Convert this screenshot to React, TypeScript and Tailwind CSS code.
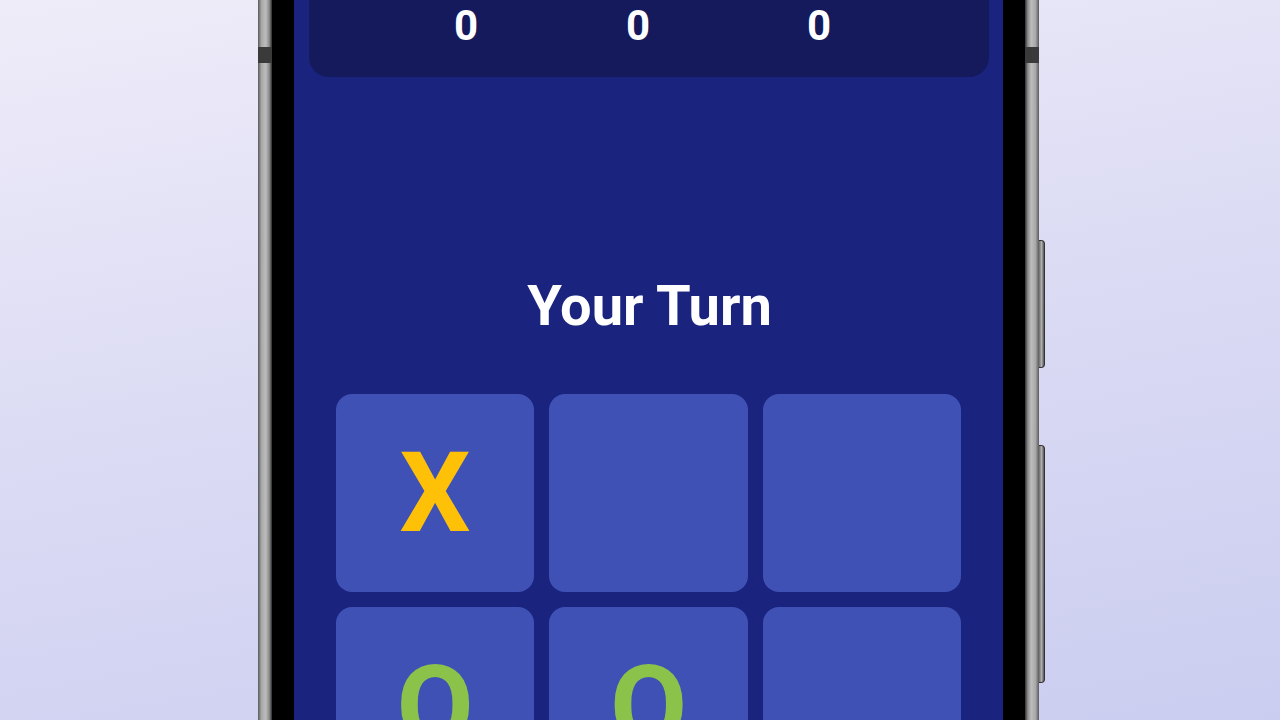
const cells: string[] = ["X", "", "", "O", "O", "", "", "", ""];

function Metal({ side }: { side: "left" | "right" }) {
  const grad =
    side === "left"
      ? "bg-[linear-gradient(90deg,#5a5a5a,#a8a8a8_25%,#bdbdbd_55%,#8c8c8c_80%,#2e2e2e)]"
      : "bg-[linear-gradient(90deg,#2e2e2e,#8c8c8c_20%,#bdbdbd_45%,#a8a8a8_75%,#5a5a5a)]";
  return (
    <div className={`w-[14px] h-full shrink-0 ${grad}`}>
      <div className="mt-[47px] h-[16px] bg-[#3a3a3a]" />
    </div>
  );
}

function Cell({ mark }: { mark: string }) {
  const color = mark === "X" ? "text-[#ffc107]" : "text-[#8bc34a]";
  return (
    <div className="h-[198px] rounded-[16px] bg-[#3f51b5] flex items-center justify-center">
      <span className={`text-[112px] font-bold leading-none ${color}`}>{mark}</span>
    </div>
  );
}

export default function App() {
  return (
    <div
      className="h-[720px] w-[1280px] overflow-hidden bg-[linear-gradient(170deg,#efecf9_0%,#dcdcf4_45%,#cbcdf0_100%)] pl-[258px] flex"
      style={{ fontFamily: "Roboto, 'Liberation Sans', sans-serif" }}
    >
      <Metal side="left" />
      <div className="w-[22px] h-full shrink-0 bg-black" />
      <div className="w-[709px] h-full shrink-0 overflow-hidden bg-[#1a237e] flex flex-col">
        <div className="shrink-0 mx-[15px] w-[680px] h-[77px] rounded-b-[20px] bg-[#141a5c] flex pl-[137px] pt-[5px]">
          <div className="w-[40px] text-center text-[42px] font-bold leading-none text-white">0</div>
          <div className="ml-[132px] w-[40px] text-center text-[42px] font-bold leading-none text-white">0</div>
          <div className="ml-[141px] w-[40px] text-center text-[42px] font-bold leading-none text-white">0</div>
        </div>
        <h1 className="shrink-0 mt-[201px] text-center text-[56px] font-bold leading-none text-white pl-[2px]">
          Your Turn
        </h1>
        <div className="shrink-0 mt-[60px] mx-[42px] grid grid-cols-3 gap-[15px]">
          {cells.map((c, i) => (
            <Cell key={i} mark={c} />
          ))}
        </div>
      </div>
      <div className="w-[22px] h-full shrink-0 bg-black" />
      <Metal side="right" />
      <div className="w-[6px] shrink-0 flex flex-col">
        <div className="shrink-0 mt-[240px] h-[128px] rounded-r-[4px] border border-l-0 border-[#333] bg-[linear-gradient(90deg,#6a6a6a,#b0b0b0_50%,#555)]" />
        <div className="shrink-0 mt-[77px] h-[238px] rounded-r-[4px] border border-l-0 border-[#333] bg-[linear-gradient(90deg,#6a6a6a,#b0b0b0_50%,#555)]" />
      </div>
    </div>
  );
}
